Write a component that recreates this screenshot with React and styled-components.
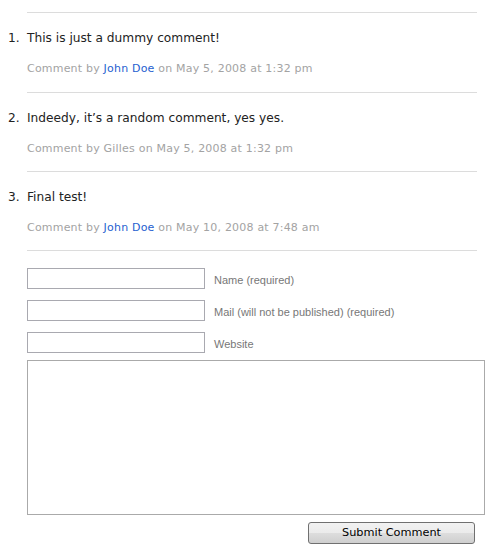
import React from "react";
import styled, { createGlobalStyle } from "styled-components";

const Global = createGlobalStyle`
  html, body { margin: 0; padding: 0; background: #fff; }
  body { font-family: "DejaVu Sans", Verdana, sans-serif; color: #333; }
`;

const Page = styled.div`
  padding: 12px 0 0 0;
`;

const List = styled.ol`
  list-style: none;
  margin: 0;
  padding: 0;
`;

const Item = styled.li`
  display: grid;
  grid-template-columns: 27px 450px;
`;

const Num = styled.div`
  padding-top: 17px;
  padding-left: 8px;
  font-size: 12.2px;
  line-height: 18px;
  color: #222;
`;

const Body = styled.div`
  border-top: 1px solid #dcdcdc;
  padding: 16px 0 ${(p) => p.$pb}px 0;
`;

const Title = styled.p`
  margin: 0 0 15px 0;
  font-size: 12.2px;
  line-height: 18px;
  color: #222;
`;

const Meta = styled.p`
  margin: 0;
  font-size: 11px;
  letter-spacing: 0.2px;
  line-height: 14px;
  color: #a3a3a3;
`;

const Author = styled.a`
  color: #1f5fd0;
  text-decoration: none;
`;

const Form = styled.form`
  margin-left: 27px;
  width: 450px;
  border-top: 1px solid #dcdcdc;
  padding-top: 17px;
  display: flex;
  flex-direction: column;
`;

const Row = styled.div`
  display: flex;
  align-items: center;
  gap: 9px;
  margin-bottom: ${(p) => p.$mb}px;
`;

const Input = styled.input`
  box-sizing: border-box;
  width: 178px;
  height: 21px;
  border: 1px solid #a9a9b0;
  margin: 0;
  padding: 0 2px;
  font-family: inherit;
  background: #fff;
`;

const Label = styled.label`
  font-family: "Liberation Sans", Arial, sans-serif;
  font-size: 11px;
  color: #777;
  padding-top: 2px;
`;

const TextArea = styled.textarea`
  box-sizing: border-box;
  width: 458px;
  height: 155px;
  border: 1px solid #aaa;
  margin: 0 0 7px 0;
  padding: 2px;
  resize: none;
  display: block;
  background: #fff;
`;

const Actions = styled.div`
  display: flex;
  justify-content: flex-end;
  padding-right: 2px;
`;

const Submit = styled.button`
  box-sizing: border-box;
  width: 167px;
  height: 22px;
  border: 1px solid #707070;
  border-radius: 3px;
  background: linear-gradient(#f2f2f2 0%, #ebebeb 50%, #dddddd 51%, #cfcfcf 100%);
  font-family: "DejaVu Sans", Tahoma, sans-serif;
  font-size: 11.3px;
  color: #000;
  padding: 0;
  line-height: 20px;
`;

const comments = [
  { text: "This is just a dummy comment!", author: "John Doe", link: true, date: "May 5, 2008 at 1:32 pm", pb: 16 },
  { text: "Indeedy, it\u2019s a random comment, yes yes.", author: "Gilles", link: false, date: "May 5, 2008 at 1:32 pm", pb: 15 },
  { text: "Final test!", author: "John Doe", link: true, date: "May 10, 2008 at 7:48 am", pb: 15 },
];

export default function App() {
  return (
    <Page>
      <Global />
      <List>
        {comments.map((c, i) => (
          <Item key={i}>
            <Num>{i + 1}.</Num>
            <Body $pb={c.pb}>
              <Title>{c.text}</Title>
              <Meta>
                Comment by {c.link ? <Author href="#">{c.author}</Author> : c.author} on {c.date}
              </Meta>
            </Body>
          </Item>
        ))}
      </List>
      <Form onSubmit={(e) => e.preventDefault()}>
        <Row $mb={11}>
          <Input id="author" />
          <Label htmlFor="author">Name (required)</Label>
        </Row>
        <Row $mb={11}>
          <Input id="email" />
          <Label htmlFor="email">Mail (will not be published) (required)</Label>
        </Row>
        <Row $mb={7}>
          <Input id="url" />
          <Label htmlFor="url">Website</Label>
        </Row>
        <TextArea />
        <Actions>
          <Submit type="submit">Submit Comment</Submit>
        </Actions>
      </Form>
    </Page>
  );
}
